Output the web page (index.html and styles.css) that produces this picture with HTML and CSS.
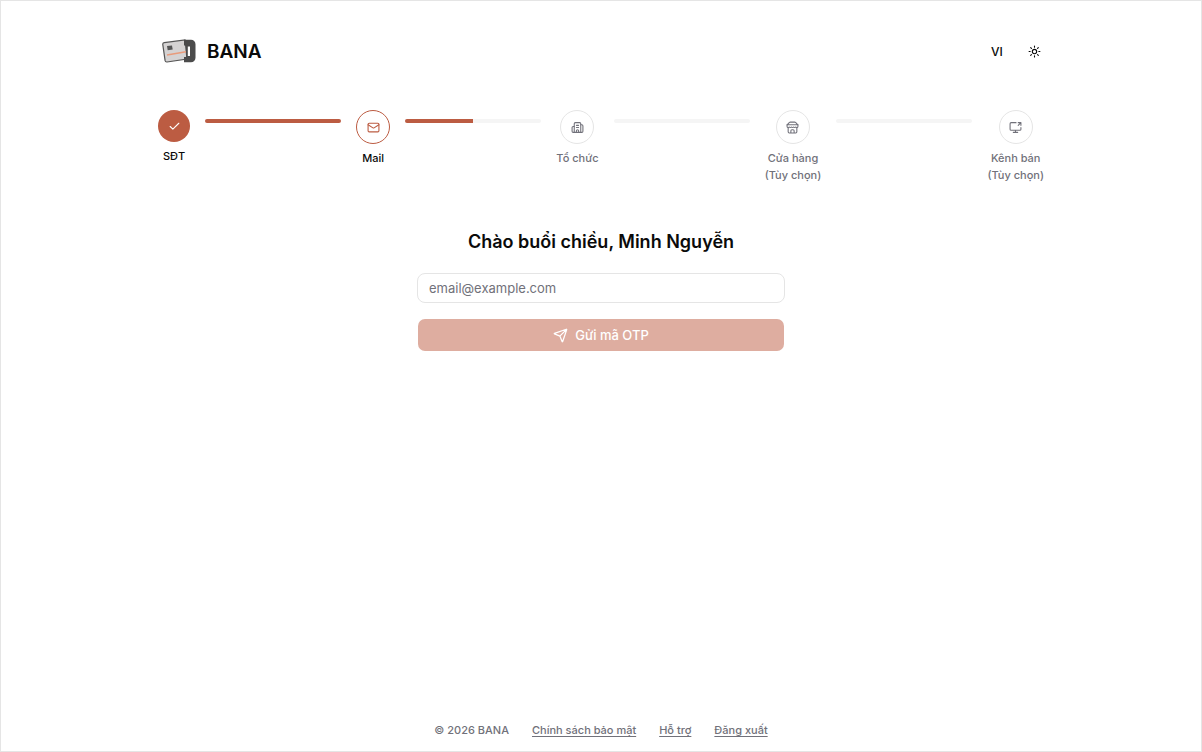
FILE: index.html
```html
<!DOCTYPE html>
<html lang="vi">
<head>
<meta charset="utf-8">
<meta name="viewport" content="width=device-width, initial-scale=1">
<title>BANA</title>
<link rel="stylesheet" href="styles.css">
</head>
<body>
<div class="page">
  <header class="header">
    <div class="brand">
      <svg class="logo" viewBox="0 0 34 24" aria-hidden="true">
        <path d="M2.200 3.700 23 1 25 20 5 23c-1 .1-1.700-.4-1.900-1.300L.8 5.700c-.2-1 .4-1.800 1.400-2z" fill="#d5d3d3" stroke="#555" stroke-width="1.200"/>
        <path d="M5 7.100 10 6.400l.7 4.100-5 .7z" fill="#555"/>
        <path d="M22 .8h7a4.500 4.500 0 0 1 4.500 4.500v13.500a4.500 4.500 0 0 1-4.500 4.500h-7v-5.300h2v-11.500h-2z" fill="#4b4b4b"/>
        <path d="M5 16 24 12.800" stroke="#e99b7b" stroke-width="1.400"/>
        <path d="M24 6h2v12h-2z" fill="#4b4b4b"/>
        <path d="M25.800 7.500h2.200v9.500h-2.200z" fill="#fff"/>
      </svg>
      <span class="brand-name">BANA</span>
    </div>
    <div class="actions">
      <button class="action" type="button">VI</button>
      <button class="action" type="button" aria-label="Giao diện">
        <svg class="icon icon-small" viewBox="0 0 24 24"><circle cx="12" cy="12" r="4"/><path d="M12 2v2M12 20v2M4.930 4.930l1.410 1.410M17.660 17.660l1.410 1.410M2 12h2M20 12h2M6.340 17.660l-1.410 1.410M19.070 4.930l-1.410 1.410"/></svg>
      </button>
    </div>
  </header>

  <ol class="steps">
    <li class="step done">
      <span class="dot"><svg class="icon icon-small" viewBox="0 0 24 24"><path d="M20 6 9 17l-5-5"/></svg></span>
      <span class="label">SĐT</span>
    </li>
    <li class="track" aria-hidden="true"><span class="fill full"></span></li>
    <li class="step current">
      <span class="dot"><svg class="icon icon-small" viewBox="0 0 24 24"><rect x="2" y="4" width="20" height="16" rx="2"/><path d="m22 7-8.970 5.700a1.940 1.940 0 0 1-2.060 0L2 7"/></svg></span>
      <span class="label">Mail</span>
    </li>
    <li class="track" aria-hidden="true"><span class="fill half"></span></li>
    <li class="step">
      <span class="dot"><svg class="icon icon-small" viewBox="0 0 24 24"><path d="M10 12h4M10 8h4M14 21v-3a2 2 0 0 0-4 0v3M6 10H4a2 2 0 0 0-2 2v7a2 2 0 0 0 2 2h16a2 2 0 0 0 2-2V9a2 2 0 0 0-2-2h-2"/><path d="M6 21V5a2 2 0 0 1 2-2h8a2 2 0 0 1 2 2v16"/></svg></span>
      <span class="label">Tổ chức</span>
    </li>
    <li class="track" aria-hidden="true"></li>
    <li class="step">
      <span class="dot"><svg class="icon icon-small" viewBox="0 0 24 24"><path d="m2 7 4.410-4.410A2 2 0 0 1 7.830 2h8.340a2 2 0 0 1 1.420.59L22 7M4 12v8a2 2 0 0 0 2 2h12a2 2 0 0 0 2-2v-8M15 22v-4a2 2 0 0 0-2-2h-2a2 2 0 0 0-2 2v4M2 7h20"/><path d="M22 7v3a2 2 0 0 1-2 2 2.700 2.700 0 0 1-1.590-.63.7.7 0 0 0-.82 0A2.700 2.700 0 0 1 16 12a2.700 2.700 0 0 1-1.590-.63.7.7 0 0 0-.82 0A2.700 2.700 0 0 1 12 12a2.700 2.700 0 0 1-1.590-.63.7.7 0 0 0-.82 0A2.700 2.700 0 0 1 8 12a2.700 2.700 0 0 1-1.590-.63.7.7 0 0 0-.82 0A2.700 2.700 0 0 1 4 12a2 2 0 0 1-2-2V7"/></svg></span>
      <span class="label">Cửa hàng<br>(Tùy chọn)</span>
    </li>
    <li class="track" aria-hidden="true"></li>
    <li class="step">
      <span class="dot"><svg class="icon icon-small" viewBox="0 0 24 24"><path d="M13 3H4a2 2 0 0 0-2 2v10a2 2 0 0 0 2 2h16a2 2 0 0 0 2-2v-3M8 21h8M12 17v4M17 8l5-5M17 3h5v5"/></svg></span>
      <span class="label">Kênh bán<br>(Tùy chọn)</span>
    </li>
  </ol>

  <main class="main">
    <h1 class="title">Chào buổi chiều, Minh Nguyễn</h1>
    <form class="form">
      <input class="field" type="email" placeholder="email@example.com" aria-label="Email">
      <button class="submit" type="submit" disabled>
        <svg class="icon" viewBox="0 0 24 24"><path d="M14.536 21.686a.5.5 0 0 0 .937-.024l6.500-19a.496.496 0 0 0-.635-.635l-19 6.500a.5.5 0 0 0-.024.937l7.930 3.180a2 2 0 0 1 1.112 1.110zM21.854 2.147l-10.940 10.939"/></svg>
        <span>Gửi mã OTP</span>
      </button>
    </form>
  </main>

  <footer class="footer">
    <span>© 2026 BANA</span>
    <a href="#">Chính sách bảo mật</a>
    <a href="#">Hỗ trợ</a>
    <a href="#">Đăng xuất</a>
  </footer>
</div>
</body>
</html>
```

FILE: styles.css
```css
* {
  box-sizing: border-box;
}

body {
  margin: 0;
  background: #fff;
  color: #0a0a0a;
  font-family: Inter, "Liberation Sans", sans-serif;
  font-size: 13px;
}

button,
input {
  font: inherit;
}

.page {
  display: flex;
  flex-direction: column;
  align-items: center;
  min-height: 100vh;
  padding: 34px 16px 12px;
  border: 1px solid #e5e5e5;
}

.header {
  display: flex;
  align-items: center;
  justify-content: space-between;
  width: 100%;
  max-width: 886px;
  height: 32px;
  padding-left: 4px;
}

.brand {
  display: flex;
  align-items: center;
  gap: 11px;
}

.logo {
  width: 34px;
  height: 24px;
}

.brand-name {
  font-size: 19px;
  font-weight: 600;
}

.actions {
  display: flex;
  gap: 17px;
}

.action {
  display: flex;
  align-items: center;
  justify-content: center;
  min-width: 20px;
  height: 24px;
  padding: 0;
  border: 0;
  background: none;
  color: inherit;
  font-size: 12px;
  font-weight: 500;
}

.icon {
  width: 15px;
  height: 15px;
  fill: none;
  stroke: currentColor;
  stroke-width: 2;
  stroke-linecap: round;
  stroke-linejoin: round;
}

.icon-small {
  width: 13px;
  height: 13px;
}

.steps {
  display: flex;
  align-items: flex-start;
  gap: 15px;
  width: 100%;
  max-width: 886px;
  margin: 43px 0 0;
  padding: 0;
  list-style: none;
}

.step {
  display: flex;
  flex-direction: column;
  align-items: center;
  gap: 6px;
  color: #71717a;
  text-align: center;
}

.dot {
  display: flex;
  align-items: center;
  justify-content: center;
  width: 34px;
  height: 34px;
  border: 1px solid #e5e5e5;
  border-radius: 50%;
}

.done .dot {
  width: 32px;
  height: 32px;
  border: 0;
  background: #bc5c42;
  color: #fff;
}

.current .dot {
  border-color: #bc5c42;
  color: #bc5c42;
}

.label {
  font-size: 11px;
  font-weight: 500;
  line-height: 17px;
  white-space: nowrap;
}

.done .label,
.current .label {
  color: #0a0a0a;
}

.track {
  flex: 1;
  height: 4px;
  margin-top: 9px;
  border-radius: 2px;
  background: #f5f5f5;
  overflow: hidden;
}

.fill {
  display: block;
  height: 100%;
  background: #bc5c42;
}

.full {
  width: 100%;
}

.half {
  width: 50%;
}

.main {
  display: flex;
  flex: 1;
  flex-direction: column;
  align-items: center;
  gap: 18px;
  width: 100%;
  padding-top: 44px;
}

.title {
  margin: 0;
  font-size: 18px;
  font-weight: 600;
  line-height: 27px;
}

.form {
  display: flex;
  flex-direction: column;
  gap: 16px;
  width: 100%;
  max-width: 368px;
}

.field {
  width: 100%;
  height: 30px;
  padding: 0 11px;
  border: 1px solid #e5e5e5;
  border-radius: 8px;
  background: #fff;
  color: inherit;
}

.field::placeholder {
  color: #71717a;
}

.submit {
  display: flex;
  align-items: center;
  justify-content: center;
  gap: 7px;
  height: 32px;
  margin: 0 1px;
  padding: 0 16px;
  border: 0;
  border-radius: 7px;
  background: #deada0;
  color: #fff;
  font-weight: 500;
}

.footer {
  display: flex;
  gap: 23px;
  color: #71717a;
  font-size: 11px;
  font-weight: 500;
  line-height: 17px;
}

.footer a {
  color: inherit;
  text-underline-offset: 2px;
}
```
